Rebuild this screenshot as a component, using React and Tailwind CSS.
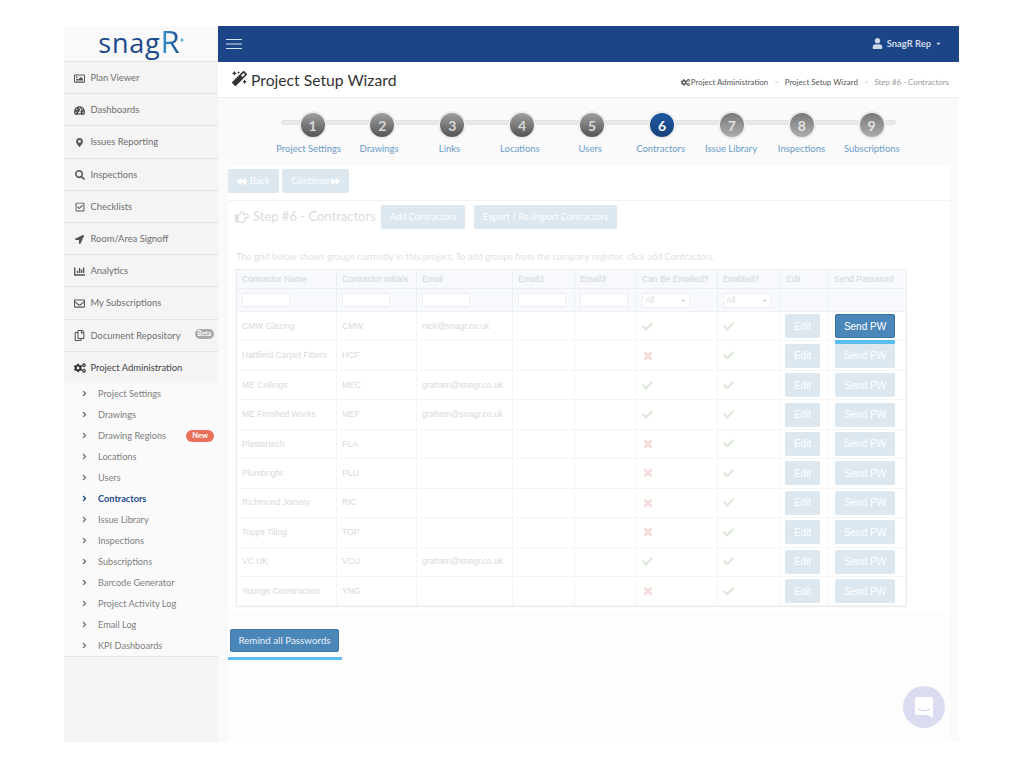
import { FaRegImage, FaTachometerAlt, FaMapMarkerAlt, FaSearch, FaRegCheckSquare, FaLocationArrow, FaChartBar, FaRegEnvelope, FaRegCopy, FaCogs, FaMagic, FaUser, FaRegHandPointRight, FaBackward, FaForward, FaCheck, FaTimes, FaAngleRight, FaCaretDown } from 'react-icons/fa';

const mainNav = [
  { label: 'Plan Viewer', icon: FaRegImage, size: 'w-[11px] h-[11px]' },
  { label: 'Dashboards', icon: FaTachometerAlt, size: 'w-[11px] h-[11px]' },
  { label: 'Issues Reporting', icon: FaMapMarkerAlt, size: 'w-[11px] h-[9px]' },
  { label: 'Inspections', icon: FaSearch, size: 'w-[10px] h-[10px]' },
  { label: 'Checklists', icon: FaRegCheckSquare, size: 'w-[10px] h-[10px]' },
  { label: 'Room/Area Signoff', icon: FaLocationArrow, size: 'w-[9px] h-[9px]' },
  { label: 'Analytics', icon: FaChartBar, size: 'w-[11px] h-[11px]' },
  { label: 'My Subscriptions', icon: FaRegEnvelope, size: 'w-[11px] h-[11px]' },
  { label: 'Document Repository', icon: FaRegCopy, size: 'w-[11px] h-[11px]', beta: true },
];

const subNav = ['Project Settings', 'Drawings', 'Drawing Regions', 'Locations', 'Users', 'Contractors', 'Issue Library', 'Inspections', 'Subscriptions', 'Barcode Generator', 'Project Activity Log', 'Email Log', 'KPI Dashboards'];

const steps = ['Project Settings', 'Drawings', 'Links', 'Locations', 'Users', 'Contractors', 'Issue Library', 'Inspections', 'Subscriptions'];

const columns = [
  { label: 'Contractor Name', width: 'w-[100px]', filter: 'input' },
  { label: 'Contractor Initials', width: 'w-[80px]', filter: 'input' },
  { label: 'Email', width: 'w-[96px]', filter: 'input' },
  { label: 'Email2', width: 'w-[62px]', filter: 'input' },
  { label: 'Email3', width: 'w-[62px]', filter: 'input' },
  { label: 'Can Be Emailed?', width: 'w-[81px]', filter: 'select' },
  { label: 'Enabled?', width: 'w-[63px]', filter: 'select' },
  { label: 'Edit', width: 'w-[48px]' },
  { label: 'Send Password', width: 'w-[78px]' },
];

const rows = [
  ['CMW Glazing', 'CMW', 'nick@snagr.co.uk', true],
  ['Hattfield Carpet Fitters', 'HCF', '', false],
  ['ME Ceilings', 'MEC', 'graham@snagr.co.uk', true],
  ['ME Finished Works', 'MEF', 'graham@snagr.co.uk', true],
  ['Plastertech', 'PLA', '', false],
  ['Plumbright', 'PLU', '', false],
  ['Richmond Joinery', 'RIC', '', false],
  ['Topps Tiling', 'TOP', '', false],
  ['VC UK', 'VCU', 'graham@snagr.co.uk', true],
  ['Youngs Construction', 'YNG', '', false],
];

const Sidebar = () => (
  <aside className="w-[154px] shrink-0 bg-[#f4f4f4] flex flex-col">
    <div className="h-[36px] bg-[#f9f9f9] border-b border-[#e4e4e4] flex items-center justify-center text-[#1c4a8a] leading-none font-['Open_Sans',sans-serif]">
      <span className="text-[27px] tracking-[0.8px] leading-[30px] mt-[-2px]">snag</span>
      <span className="text-[31px] leading-[30px] mt-[-6px] bg-gradient-to-r from-[#3a9ad6] to-[#1c4a8a] bg-clip-text text-transparent">R</span>
      <span className="mt-[-8px] ml-[1px] w-0 h-0 border-y-[2px] border-y-transparent border-l-[3px] border-l-[#3fa7dc]" />
    </div>
    {mainNav.map((item) => (
      <div key={item.label} className="h-[32.2px] flex items-center border-b border-[#e2e2e2] pl-[10px] pt-[1px] text-[#6f6f6f]">
        <div className="w-[11px] flex justify-center shrink-0">
          <item.icon className={`${item.size} text-[#555] shrink-0`} />
        </div>
        <span className="ml-[5.5px] text-[9.4px]">{item.label}</span>
        {item.beta && <span className="ml-auto mr-[4px] mb-[4px] px-[3px] rounded-full bg-[#aaa] text-white text-[6.5px] font-bold leading-[10px]">Beta</span>}
      </div>
    ))}
    <div className="h-[31.5px] flex items-center pl-[10px] pt-[1px] text-[#444]">
      <FaCogs className="w-[12px] h-[12px] text-[#333] shrink-0" />
      <span className="ml-[4.5px] text-[9.4px]">Project Administration</span>
    </div>
    <div className="bg-[#fafafa] border-b border-[#e2e2e2]">
      {subNav.map((item) => (
        <div key={item} className={`h-[21px] flex items-center pl-[16px] text-[9.2px] ${item === 'Contractors' ? 'text-[#1c4a8a] font-bold' : 'text-[#808080]'}`}>
          <FaAngleRight className={`w-[9px] h-[9px] ${item === 'Contractors' ? 'text-[#1c4a8a]' : 'text-[#777]'}`} />
          <span className="ml-[9px]">{item}</span>
          {item === 'Drawing Regions' && <span className="ml-auto mr-[4px] px-[6px] rounded-full bg-[#e8705a] text-white text-[7.5px] font-bold leading-[12px]">New</span>}
        </div>
      ))}
    </div>
  </aside>
);

const stepColour = (i) => {
  if (i === 5) return 'bg-gradient-to-b from-[#1d5aa3] to-[#164078] text-white';
  if (i > 5) return 'bg-gradient-to-b from-[#7a7a7a] to-[#adadad] text-[#e2e2e2]';
  return 'bg-gradient-to-b from-[#a0a0a0] to-[#555] text-[#d8d8d8]';
};

const Wizard = () => (
  <div className="h-[68px] pt-[13px]">
    <div className="relative h-[30px] ml-[55px] w-[623px] bg-[#fafafa]">
      <div className="absolute left-[8px] right-0 top-[9px] h-[5px] rounded-full bg-[#eaeaea] border border-[#e2e2e2]" />
      <div className="relative flex pl-[25.5px] gap-[41.9px]">
        {steps.map((step, i) => (
          <div key={step} className={`w-[28px] h-[28px] shrink-0 rounded-full border-2 border-[#ececec] flex items-center justify-center text-[14px] font-bold ${stepColour(i)}`}>
            {i + 1}
          </div>
        ))}
      </div>
    </div>
    <div className="flex ml-[55.5px] mt-[1px]">
      {steps.map((step) => (
        <div key={step} className="w-[70.4px] shrink-0 text-center text-[9.45px] leading-[13px] text-[#6a9cc7] whitespace-nowrap">{step}</div>
      ))}
    </div>
  </div>
);

const PaleButton = ({ children, className = '' }) => (
  <div className={`h-[24px] flex items-center justify-center rounded-[2px] bg-[#dce7f0] text-white ${className}`}>{children}</div>
);

const ContractorTable = () => (
  <table className="table-fixed border-collapse w-[670px] ml-[8px] border border-[#e6eaf2] shadow-[0_1px_1px_#ececec] font-['Liberation_Sans',sans-serif] text-[8.5px]">
    <colgroup>
      {columns.map((col) => <col key={col.label} className={col.width} />)}
    </colgroup>
    <thead className="bg-[#f7f9fc] text-[#ced5e3] font-normal">
      <tr className="h-[19px] border-b border-[#e9edf5]">
        {columns.map((col) => (
          <th key={col.label} className="px-[5px] font-normal text-left border-r border-[#eaeef5] whitespace-nowrap overflow-hidden">{col.label}</th>
        ))}
      </tr>
      <tr className="h-[23px] border-b border-[#eef0f5]">
        {columns.map((col) => (
          <th key={col.label} className="px-[5px] font-normal text-left border-r border-[#eaeef5]">
            {col.filter === 'input' && <div className="w-[48px] h-[14px] bg-white border border-[#eceef2]" />}
            {col.filter === 'select' && (
              <div className="w-[48px] h-[15px] bg-white border border-[#eceef2] rounded-[1px] flex items-center justify-between px-[2px] text-[#dcdcdc]">
                All<FaCaretDown className="w-[7px] h-[7px] text-[#ccc]" />
              </div>
            )}
          </th>
        ))}
      </tr>
    </thead>
    <tbody className="text-[#d9d9d9]">
      {rows.map((row, i) => (
        <tr key={row[0]} className="h-[29.45px] border-b border-[#f5f5f5]">
          <td className="px-[5px] border-r border-[#f5f5f5] whitespace-nowrap">{row[0]}</td>
          <td className="px-[5px] border-r border-[#f5f5f5]">{row[1]}</td>
          <td className="px-[5px] border-r border-[#f5f5f5] whitespace-nowrap overflow-hidden">{row[2]}</td>
          <td className="border-r border-[#f5f5f5]" />
          <td className="border-r border-[#f5f5f5]" />
          <td className="px-[5px] border-r border-[#f5f5f5]">
            {row[3] ? <FaCheck className="w-[11px] h-[11px] text-[#dce9d8]" /> : <FaTimes className="w-[12px] h-[12px] text-[#f8d5d4]" />}
          </td>
          <td className="px-[5px] border-r border-[#f5f5f5]"><FaCheck className="w-[11px] h-[11px] text-[#dce9d8]" /></td>
          <td className="px-[4px] border-r border-[#f5f5f5]">
            <div className="w-[35px] h-[24px] rounded-[2px] bg-[#dce7f0] text-white text-[10px] flex items-center justify-center">Edit</div>
          </td>
          <td className="px-[6px]">
            <div className="relative">
              <div className={`w-[60px] h-[24px] rounded-[2px] text-white text-[10px] flex items-center justify-center ${i === 0 ? 'bg-[#4a86b8] border border-[#3a70a0]' : 'bg-[#dce7f0]'}`}>Send PW</div>
              {i === 0 && <div className="absolute left-0 top-[26px] w-[60px] h-[4px] bg-[#5bbcef]" />}
            </div>
          </td>
        </tr>
      ))}
    </tbody>
  </table>
);

const Content = () => (
  <div className="ml-[10px] mr-[9px] bg-white h-[447px] pt-[3px]">
    <div className="flex gap-[3px] pb-[7px] border-b border-[#f3f3f3]">
      <PaleButton className="w-[51px] text-[9.6px]"><FaBackward className="w-[9px] h-[9px] mr-[4px]" />Back</PaleButton>
      <PaleButton className="w-[67px] text-[9.6px]">Continue<FaForward className="w-[9px] h-[9px] ml-[1px]" /></PaleButton>
    </div>
    <div className="flex items-center mt-[4px] pl-[7px] h-[24px] text-[#dcdcdc]">
      <FaRegHandPointRight className="w-[14px] h-[14px] mr-[4px] shrink-0" />
      <span className="text-[13px] w-[128px] whitespace-nowrap">Step #6 - Contractors</span>
      <PaleButton className="w-[84px] text-[9.2px]">Add Contractors</PaleButton>
      <PaleButton className="ml-[9px] w-[143px] text-[9.1px]">Export / Re-import Contractors</PaleButton>
    </div>
    <p className="mt-[21px] ml-[8px] text-[9.3px] leading-[13px] text-[#e2e2e2]">The grid below shows groups currently in this project. To add groups from the company register, click add Contractors.</p>
    <div className="mt-[6px]">
      <ContractorTable />
    </div>
  </div>
);

const App = () => (
  <div className="relative w-[1024px] h-[768px] bg-white pt-[26px] pl-[64px] font-['Lato',sans-serif]">
    <div className="relative w-[895px] h-[716px] flex">
      <Sidebar />
      <main className="flex-1 min-w-0 bg-[#fafafa] flex flex-col">
        <header className="h-[36px] shrink-0 bg-[#1c4587] flex items-center justify-between pl-[8px] pr-[17px]">
          <svg width="16" height="12" viewBox="0 0 16 12" fill="none" stroke="#dbe4f0" strokeWidth="1.2">
            <path d="M0 1.5h16M0 6h16M0 10.5h16" />
          </svg>
          <div className="flex items-center text-[9.4px] text-[#cfd9e8]">
            <FaUser className="w-[11px] h-[11px] mr-[4px]" />
            <span className="font-bold">SnagR Rep</span>
            <FaCaretDown className="w-[7px] h-[7px] ml-[4px]" />
          </div>
        </header>
        <div className="h-[36px] shrink-0 bg-white border-b border-[#eeeeee] flex items-center justify-between pl-[14px] pr-[10px]">
          <div className="flex items-center text-[#333] text-[15.7px] mt-[2px]">
            <FaMagic className="w-[15px] h-[15px] mr-[4px] mb-[3px]" />
            Project Setup Wizard
          </div>
          <div className="flex items-center text-[7.9px] text-[#555] mt-[7px]">
            <FaCogs className="w-[9px] h-[9px] mr-[1px]" />
            <span>Project Administration</span>
            <span className="mx-[6px] text-[#ccc]">&gt;</span>
            <span>Project Setup Wizard</span>
            <span className="mx-[6px] text-[#ccc]">&gt;</span>
            <span className="text-[#999]">Step #6 - Contractors</span>
          </div>
        </div>
        <Wizard />
        <Content />
        <div className="ml-[10px] mr-[9px] flex-1 bg-[#fdfdfd] pt-[16px] pl-[2px]">
          <div className="relative w-[109px] h-[23px] rounded-[2px] bg-[#4a86b8] border border-[#3f78a8] text-[#e8f0f7] text-[9.8px] flex items-center justify-center">
            Remind all Passwords
            <div className="absolute left-[-3px] top-[27px] w-[114px] h-[3px] bg-[#5bbcef]" />
          </div>
        </div>
      </main>
      <div className="absolute left-[839px] top-[660px] w-[42px] h-[42px] rounded-full bg-[#dcdcf0] flex items-center justify-center">
        <svg width="20" height="23" viewBox="0 0 20 23">
          <path d="M3 1h14a2 2 0 0 1 2 2v19l-5-3H3a2 2 0 0 1-2-2V3a2 2 0 0 1 2-2z" fill="#fff" />
          <path d="M4 13c3.5 2.2 8.5 2.2 12 0" fill="none" stroke="#c9c9e2" strokeWidth="1" />
        </svg>
      </div>
    </div>
  </div>
);

export default App;
